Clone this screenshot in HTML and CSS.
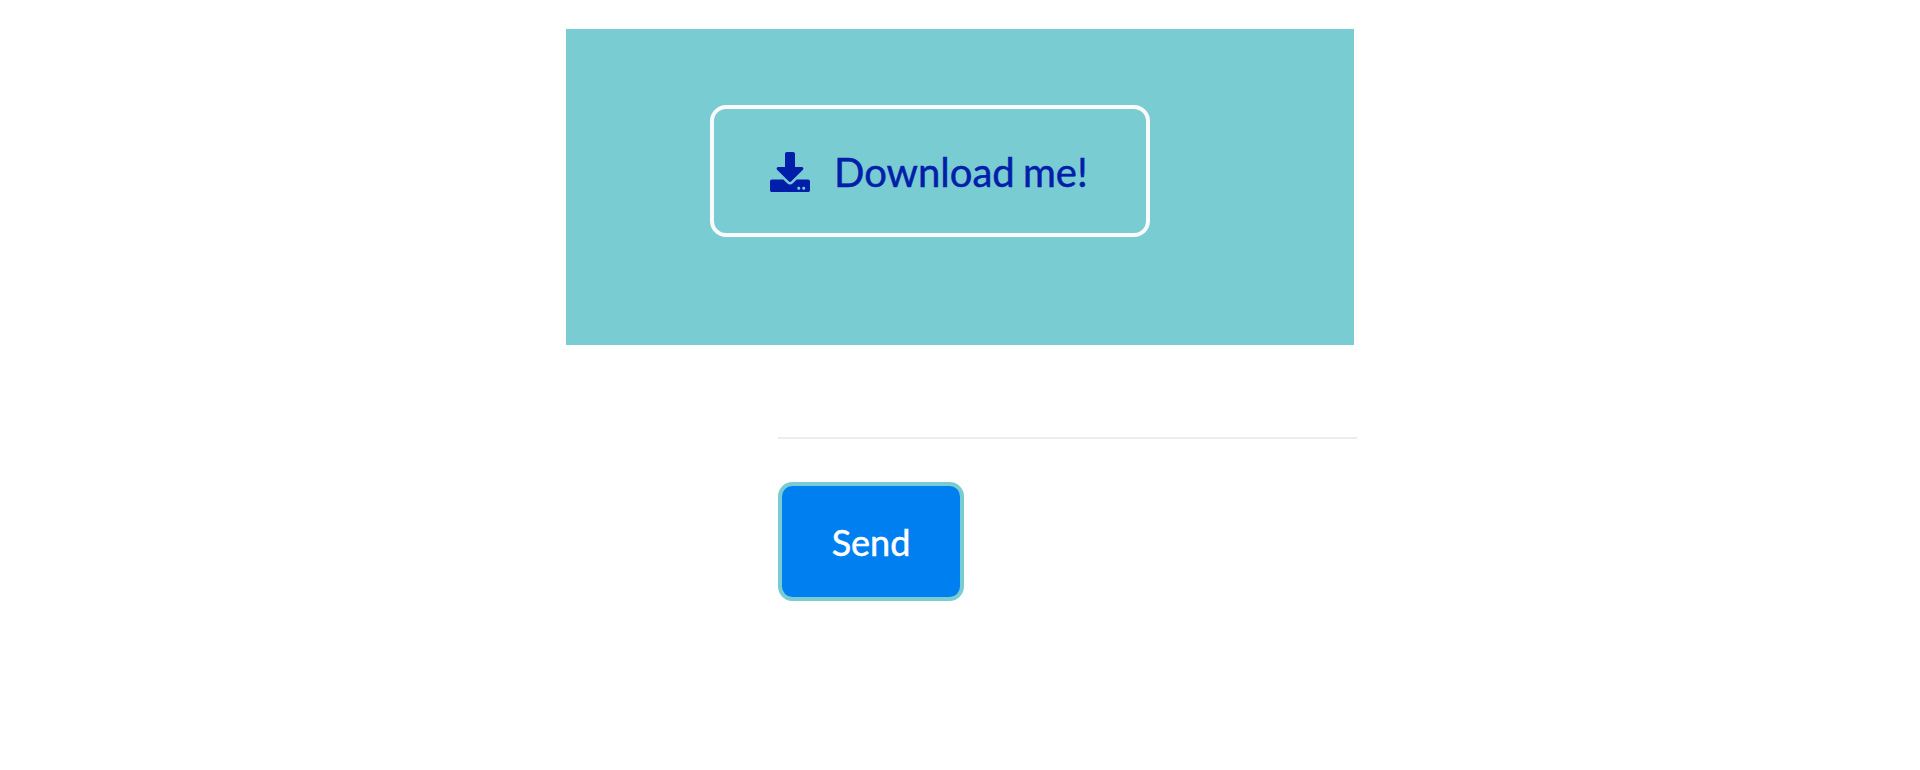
FILE: index.html
```html
<!DOCTYPE html>
<html lang="en">
<head>
<meta charset="utf-8">
<title>Buttons</title>
<link rel="stylesheet" href="styles.css">
</head>
<body>
<main class="page">
  <section class="panel">
    <a class="btn btn-download" href="#">
      <svg class="icon" viewBox="0 0 512 512" aria-hidden="true"><path fill="currentColor" d="M216 0h80c13.3 0 24 10.7 24 24v168h87.7c17.8 0 26.7 21.5 14.1 34.1L269.7 378.3c-7.5 7.5-19.8 7.5-27.3 0L90.1 226.1c-12.6-12.6-3.7-34.1 14.1-34.1H192V24c0-13.3 10.7-24 24-24zm296 376v112c0 13.3-10.7 24-24 24H24c-13.3 0-24-10.7-24-24V376c0-13.3 10.7-24 24-24h146.7l49 49c20.1 20.1 52.5 20.1 72.6 0l49-49H488c13.3 0 24 10.7 24 24zm-124 88c0-11-9-20-20-20s-20 9-20 20 9 20 20 20 20-9 20-20zm64 0c0-11-9-20-20-20s-20 9-20 20 9 20 20 20 20-9 20-20z"/></svg>
      <span class="label">Download me!</span>
    </a>
  </section>
  <section class="form-footer">
    <button class="btn btn-send" type="button">Send</button>
  </section>
</main>
</body>
</html>
```

FILE: styles.css
```css
* { box-sizing: border-box; }

body {
  margin: 0;
  background: #fff;
  font-family: Lato, sans-serif;
}

.page {
  width: 791px;
  margin: 0 0 0 566px;
  padding-top: 29px;
}

.panel {
  width: 788px;
  height: 316px;
  padding: 76px 144px;
  background: #79cdd2;
}

.btn {
  display: flex;
  align-items: center;
  border: 4px solid;
  border-radius: 16px;
  font-family: inherit;
  white-space: nowrap;
  text-decoration: none;
  -webkit-text-stroke: 0.5px currentColor;
}

.btn-download {
  width: 440px;
  height: 132px;
  padding: 0 0 0 56px;
  gap: 24px;
  border-color: #fafafc;
  color: #001eaa;
  font-size: 40px;
  line-height: 60px;
}

.icon {
  flex: none;
  width: 40px;
  height: 40px;
  margin-top: 2px;
}

.label {
  padding-top: 2px;
  word-spacing: -2px;
}

.form-footer {
  margin: 92px 0 0 212px;
  padding-top: 43px;
  border-top: 2px solid #e9edf1;
}

.btn-send {
  justify-content: center;
  width: 186px;
  height: 119px;
  padding: 0;
  border-color: #79cdd2;
  border-radius: 14.4px;
  background: #007ff0;
  color: #fff;
  font-size: 36px;
  line-height: 54px;
}
```
